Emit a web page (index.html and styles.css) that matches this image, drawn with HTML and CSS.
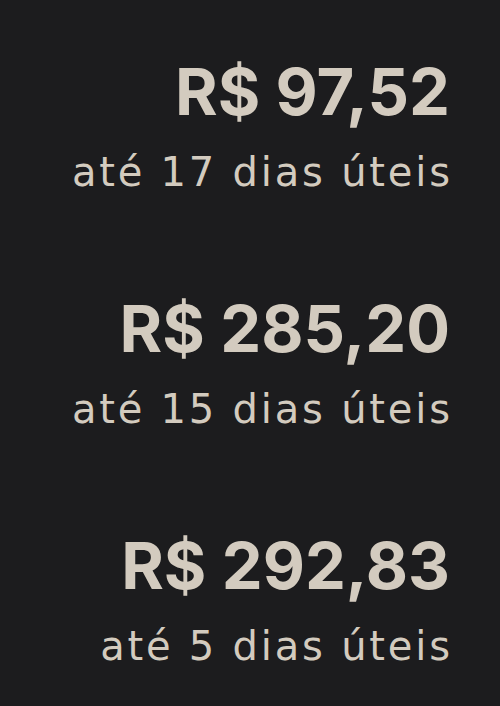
FILE: index.html
```html
<!doctype html>
<html lang="pt-BR">
<head>
    <meta charset="UTF-8">
    <meta name="viewport" content="width=device-width, initial-scale=1.0">
    <title>Frete</title>
    <link rel="stylesheet" href="styles.css">
</head>
<body>
    <div class="rates">
        <div class="rate">
            <span class="price">R$ 97,52</span>
            <span class="term">até 17 dias úteis</span>
        </div>
        <div class="rate">
            <span class="price">R$ 285,20</span>
            <span class="term">até 15 dias úteis</span>
        </div>
        <div class="rate">
            <span class="price">R$ 292,83</span>
            <span class="term">até 5 dias úteis</span>
        </div>
    </div>
</body>
</html>
```

FILE: styles.css
```css
* {
    margin: 0;
    padding: 0;
    box-sizing: border-box;
}
body {
    background-color: #1c1c1e;
    color: #d3cbbf;
    font-family: Inter, "Noto Sans", sans-serif;
}
.rates {
    display: flex;
    flex-direction: column;
    align-items: flex-end;
    gap: 104px;
    padding: 59px 50px 0 0;
}
.rate {
    display: flex;
    flex-direction: column;
    align-items: flex-end;
    gap: 28px;
}
.price {
    font-size: 65px;
    font-weight: 700;
    line-height: 1;
}
.term {
    font-family: "DejaVu Sans", sans-serif;
    font-size: 40px;
    font-weight: 400;
    line-height: 1;
    letter-spacing: 2.8px;
    margin-right: -2.8px;
}
```
